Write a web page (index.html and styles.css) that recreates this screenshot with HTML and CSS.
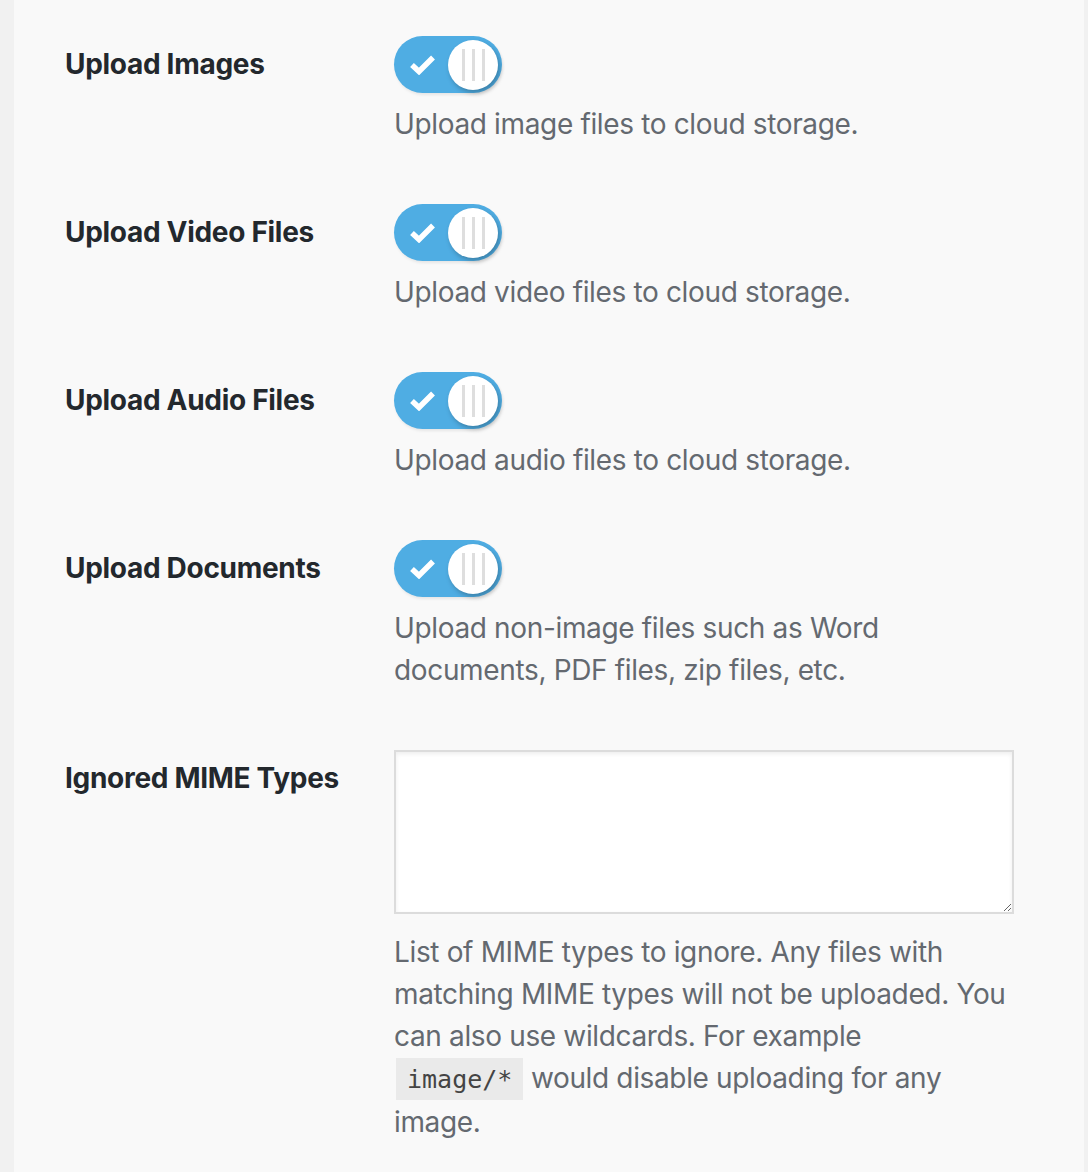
FILE: index.html
```html
<!DOCTYPE html>
<html lang="en">
<head>
    <meta charset="UTF-8">
    <meta name="viewport" content="width=device-width, initial-scale=1.0">
    <title>Upload Settings</title>
    <link rel="stylesheet" href="styles.css">
</head>
<body>
    <div class="wrap">
        <div class="settings">

            <div class="row">
                <div class="label">Upload Images</div>
                <div class="field">
                    <label class="toggle">
                        <input type="checkbox" checked>
                        <span class="track">
                            <svg class="check" viewBox="0 0 25 21"><path d="M2 11 L9 17.5 L23 3.5" fill="none" stroke="#fff" stroke-width="5.5"/></svg>
                            <span class="knob"><i></i><i></i><i></i></span>
                        </span>
                    </label>
                    <p class="desc">Upload image files to cloud storage.</p>
                </div>
            </div>

            <div class="row">
                <div class="label">Upload Video Files</div>
                <div class="field">
                    <label class="toggle">
                        <input type="checkbox" checked>
                        <span class="track">
                            <svg class="check" viewBox="0 0 25 21"><path d="M2 11 L9 17.5 L23 3.5" fill="none" stroke="#fff" stroke-width="5.5"/></svg>
                            <span class="knob"><i></i><i></i><i></i></span>
                        </span>
                    </label>
                    <p class="desc">Upload video files to cloud storage.</p>
                </div>
            </div>

            <div class="row">
                <div class="label">Upload Audio Files</div>
                <div class="field">
                    <label class="toggle">
                        <input type="checkbox" checked>
                        <span class="track">
                            <svg class="check" viewBox="0 0 25 21"><path d="M2 11 L9 17.5 L23 3.5" fill="none" stroke="#fff" stroke-width="5.5"/></svg>
                            <span class="knob"><i></i><i></i><i></i></span>
                        </span>
                    </label>
                    <p class="desc">Upload audio files to cloud storage.</p>
                </div>
            </div>

            <div class="row">
                <div class="label">Upload Documents</div>
                <div class="field">
                    <label class="toggle">
                        <input type="checkbox" checked>
                        <span class="track">
                            <svg class="check" viewBox="0 0 25 21"><path d="M2 11 L9 17.5 L23 3.5" fill="none" stroke="#fff" stroke-width="5.5"/></svg>
                            <span class="knob"><i></i><i></i><i></i></span>
                        </span>
                    </label>
                    <p class="desc">Upload non-image files such as Word documents, PDF files, zip files, etc.</p>
                </div>
            </div>

            <div class="row">
                <div class="label">Ignored MIME Types</div>
                <div class="field">
                    <textarea class="mime" name="ignored_mime_types"></textarea>
                    <p class="desc after-input">List of MIME types to ignore. Any files with matching MIME types will not be uploaded. You can also use wildcards. For example<br><code>image/*</code> would disable uploading for any image.</p>
                </div>
            </div>

        </div>
    </div>
</body>
</html>
```

FILE: styles.css
```css
body {
    margin: 0;
    background-color: #f1f1f1;
    font-family: Inter, "Open Sans", sans-serif;
}

.wrap {
    margin: 0 4px 0 14px;
    min-height: 100vh;
    background-color: #f9f9f9;
}

.settings {
    padding: 36px 0 0 51px;
}

.row {
    display: grid;
    grid-template-columns: 329px 620px;
    margin-bottom: 59px;
}

.label {
    padding-top: 7px;
    font-size: 28px;
    line-height: 42px;
    font-weight: 700;
    letter-spacing: -0.3px;
    color: #23282d;
}

/* toggle switch */
.toggle {
    display: block;
    width: 108px;
}

.toggle input {
    display: none;
}

.track {
    display: flex;
    align-items: center;
    justify-content: space-between;
    height: 57px;
    padding: 0 4px 0 16px;
    border-radius: 29px;
    background-color: #4fade3;
    box-shadow: 1px 2px 3px rgba(0, 0, 0, 0.08);
}

.check {
    width: 25px;
    height: 21px;
}

.knob {
    display: flex;
    justify-content: center;
    align-items: center;
    gap: 7px;
    width: 50px;
    height: 50px;
    border-radius: 50%;
    background-color: #fff;
    box-shadow: 2px 3px 5px rgba(0, 0, 0, 0.25);
}

.knob i {
    width: 3px;
    height: 32px;
    background-color: #dedede;
}

.desc {
    margin: 10px 0 0;
    font-size: 28px;
    line-height: 42px;
    letter-spacing: -0.35px;
    color: #646970;
}

.desc.after-input {
    margin-top: 17px;
}

.mime {
    display: block;
    width: 620px;
    height: 164px;
    margin: 0;
    border: 2px solid #dcdcdc;
    box-sizing: border-box;
    background-color: #fff;
    box-shadow: inset 0 2px 4px rgba(0, 0, 0, 0.07);
}

code {
    padding: 7px 11px 6px;
    margin-left: 2px;
    font-family: "DejaVu Sans Mono", monospace;
    font-size: 25px;
    letter-spacing: 0;
    background-color: #eaeaea;
    color: #444;
}
```
